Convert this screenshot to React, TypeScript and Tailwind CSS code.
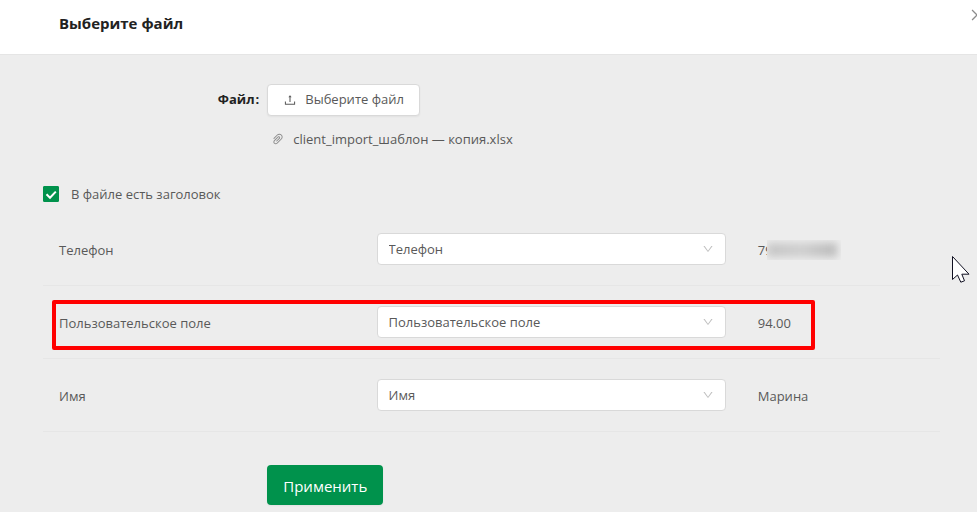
import React, { useState } from 'react'
import { AiOutlineClose, AiOutlineDown, AiOutlinePaperClip, AiOutlineUpload } from 'react-icons/ai'

const FIELDS = ['Телефон', 'Пользовательское поле', 'Имя']

const COLUMNS = [
  { title: 'Телефон', sample: '79', masked: true, marked: false },
  { title: 'Пользовательское поле', sample: '94.00', masked: false, marked: true },
  { title: 'Имя', sample: 'Марина', masked: false, marked: false },
]

function FieldSelect({ label, value }: { label: string; value: string }) {
  return (
    <div className="relative">
      <select
        aria-label={label}
        defaultValue={value}
        className="block h-8 w-full appearance-none rounded-sm border border-[#d9d9d9] bg-white pt-[2px] pr-8 pl-[11px] text-[13px]"
      >
        {FIELDS.map((field) => (
          <option key={field}>{field}</option>
        ))}
      </select>
      <AiOutlineDown className="pointer-events-none absolute top-[10px] right-3 size-3 text-[#bfbfbf]" />
    </div>
  )
}

function Cursor() {
  return (
    <svg
      className="pointer-events-none absolute top-[255px] right-[7px] h-[29px] w-[20px]"
      viewBox="0 0 20 29"
      aria-hidden="true"
    >
      <path
        d="M2.5 1.5V24.5L7.5 20L10.8 27.2L14.5 25.8L11.8 19.2H19Z"
        fill="#fff"
        stroke="#111122"
        strokeWidth="1"
      />
    </svg>
  )
}

export default function App() {
  const [hasHeader, setHasHeader] = useState(true)

  return (
    <div className="relative flex min-h-screen flex-col overflow-hidden bg-[#ededed] font-['Open_Sans','Noto_Sans',sans-serif] text-[13px] text-[#595959]">
      <header className="flex items-start justify-between overflow-hidden border-b border-[#e5e5e5] bg-white pt-[11px] pb-[19px] pl-[59px]">
        <h1 className="text-[15px] leading-6 font-bold text-[#222222]">Выберите файл</h1>
        <button type="button" aria-label="Закрыть" className="-mt-1 -mr-2 text-[#8c8c8c]">
          <AiOutlineClose className="size-4" />
        </button>
      </header>

      <form className="pt-[29px] pr-[37px] pl-[43px]" onSubmit={(e) => e.preventDefault()}>
        <div className="grid grid-cols-[25%_1fr]">
          <label htmlFor="file" className="flex justify-end gap-px pr-2 leading-[30px] font-bold text-[#222222]">
            Файл<span>:</span>
          </label>
          <div>
            <button
              id="file"
              type="button"
              className="flex h-8 items-center gap-2 rounded-sm border border-[#d9d9d9] bg-white px-[15px] shadow-xs"
            >
              <AiOutlineUpload className="size-[14px]" />
              Выберите файл
            </button>
            <div className="mt-3 flex items-center gap-2 pl-1 leading-[22px]">
              <AiOutlinePaperClip className="size-[14px] text-[#8c8c8c]" />
              client_import_шаблон — копия.xlsx
            </div>
          </div>
        </div>

        <label className="mt-[33px] flex w-fit items-center gap-3 leading-[22px]">
          <span className="relative block size-4">
            <input
              type="checkbox"
              checked={hasHeader}
              onChange={(e) => setHasHeader(e.target.checked)}
              className="block size-4 appearance-none rounded-[1px] border border-[#d9d9d9] bg-white checked:border-[#00924c] checked:bg-[#00924c]"
            />
            {hasHeader && (
              <svg className="pointer-events-none absolute inset-0 size-4" viewBox="0 0 16 16" fill="none">
                <path d="M3.5 8.2L7 11.7L12.8 5.6" stroke="#fff" strokeWidth="2" />
              </svg>
            )}
          </span>
          В файле есть заголовок
        </label>

        <table className="mt-2 w-full table-fixed border-separate border-spacing-0">
          <colgroup>
            <col className="w-[35.4%]" />
            <col className="w-[42.5%]" />
            <col />
          </colgroup>
          <tbody>
            {COLUMNS.map((column) => (
              <tr key={column.title} className="relative">
                <td className="border-b border-[#e6e6e6] px-4 pt-6 pb-5">
                  {column.title}
                  {column.marked && (
                    <span className="pointer-events-none absolute top-[14px] right-[125px] left-[9px] z-10 h-[50px] rounded-xs border-4 border-[#ff0000]" />
                  )}
                </td>
                <td className="border-b border-[#e6e6e6] px-4 py-5">
                  <FieldSelect label={column.title} value={column.title} />
                </td>
                <td className="border-b border-[#e6e6e6] px-4 pt-6 pb-5">
                  <span className="relative">
                    {column.sample}
                    {column.masked && (
                      <span className="absolute -top-px left-[9px] h-5 w-[74px] overflow-hidden bg-[#ededed]">
                        <span className="absolute inset-y-[3px] right-1 left-0 bg-linear-to-r from-[#c4c4c4] via-[#cecece] to-[#b8b8b8] blur-xs" />
                      </span>
                    )}
                  </span>
                </td>
              </tr>
            ))}
          </tbody>
        </table>

        <button
          type="submit"
          className="mt-[33px] ml-[25%] h-10 rounded-sm bg-[#00924c] px-4 pt-[2px] text-[15px] text-white shadow-xs"
        >
          Применить
        </button>
      </form>

      <Cursor />
    </div>
  )
}
